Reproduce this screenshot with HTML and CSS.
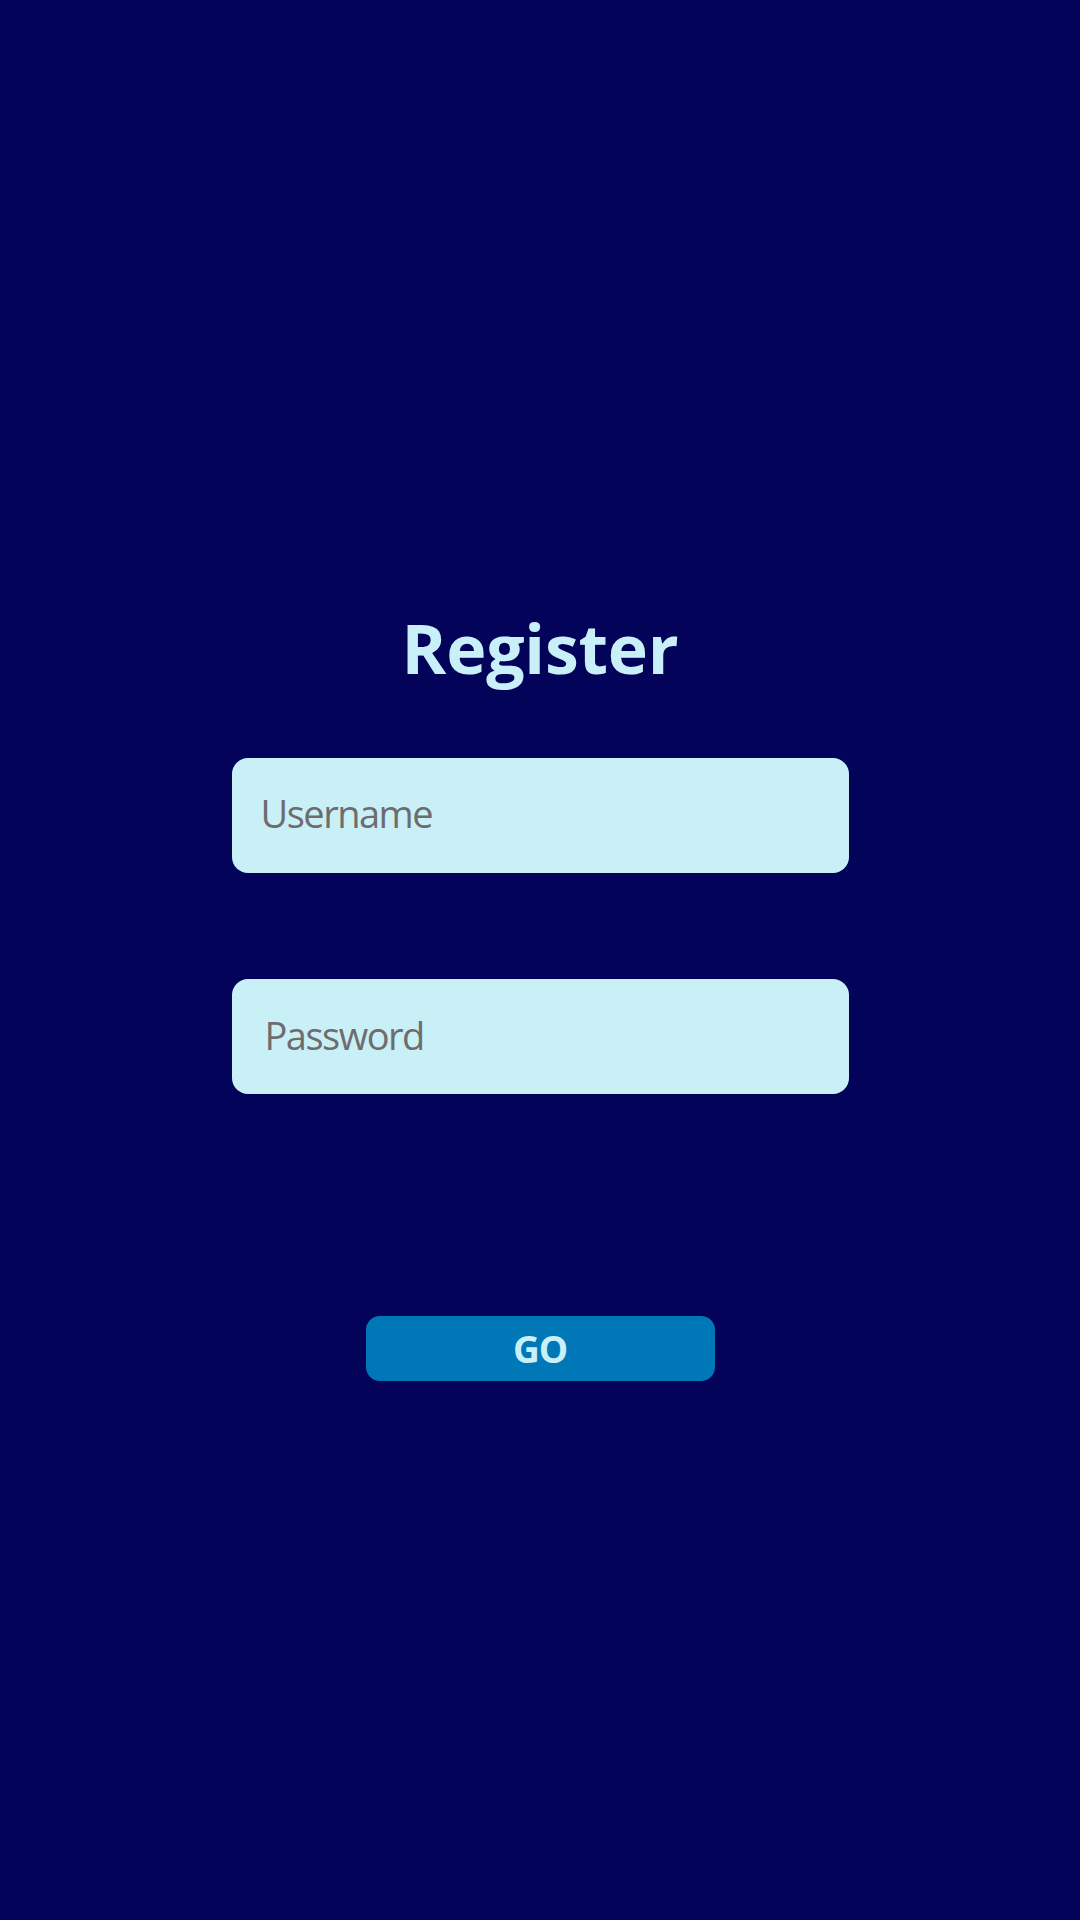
FILE: index.html
```html
<!DOCTYPE html>
<html lang="en">
<head>
<meta charset="utf-8">
<title>Register</title>
<link rel="stylesheet" href="styles.css">
</head>
<body>
<main class="page">
  <form class="form">
    <h1 class="title">Register</h1>
    <input class="field field-user" type="text" placeholder="Username">
    <input class="field field-pass" type="password" placeholder="Password">
    <button class="go" type="button">GO</button>
  </form>
</main>
</body>
</html>
```

FILE: styles.css
```css
html, body {
  margin: 0;
  padding: 0;
  background: #03035a;
}

.page {
  width: 1080px;
  height: 1920px;
  background: #03035a;
  display: flex;
  justify-content: center;
  font-family: "Open Sans", "Noto Sans", sans-serif;
}

.form {
  display: flex;
  flex-direction: column;
  align-items: center;
  padding-top: 608px;
  margin: 0;
}

.title {
  margin: 0;
  height: 80px;
  font-size: 68px;
  line-height: 80px;
  font-weight: 700;
  color: #c9f0f8;
  letter-spacing: -0.2px;
}

.field {
  box-sizing: border-box;
  width: 617px;
  height: 115px;
  border: none;
  outline: none;
  border-radius: 16px;
  background: #c9f0f7;
  padding: 0 0 6px 29px;
  font-family: "Open Sans", "Noto Sans", sans-serif;
  font-size: 38px;
  color: #6d6d6d;
  letter-spacing: -1.5px;
}

.field::placeholder {
  color: #6d6d6d;
  opacity: 1;
}

.field-user {
  margin-top: 70px;
}

.field-pass {
  margin-top: 106px;
  padding-left: 33px;
  padding-bottom: 4px;
}

.go {
  margin-top: 222px;
  width: 349px;
  height: 65px;
  border: none;
  border-radius: 14px;
  background: #0078b7;
  color: #c9f0f8;
  font-family: "Open Sans", "Noto Sans", sans-serif;
  font-weight: 700;
  font-size: 37px;
  line-height: 65px;
  padding: 0;
  letter-spacing: -1px;
}
```
